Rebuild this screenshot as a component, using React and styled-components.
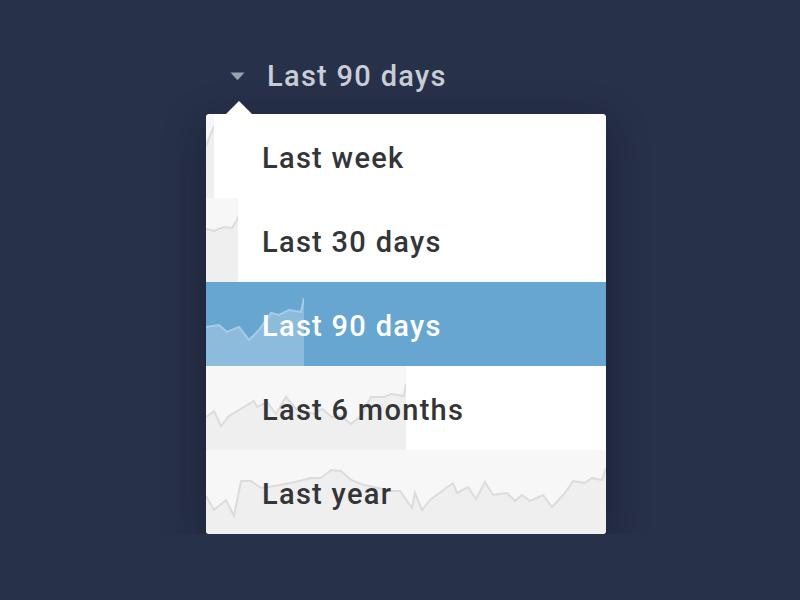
import React from "react";
import styled, { createGlobalStyle } from "styled-components";

const GlobalStyle = createGlobalStyle`
	html, body {
		margin: 0;
		padding: 0;
		background: #28314a;
	}
	body {
		font-family: Roboto, "Liberation Sans", sans-serif;
	}
`;

const ROW_H = 84;

const periods = [
	{
		label: "Last week",
		width: 8,
		points: [[0, 32], [4, 22], [8, 12]],
	},
	{
		label: "Last 30 days",
		width: 32,
		points: [[0, 31], [8, 33], [18, 29], [26, 30], [31, 22], [32, 18]],
	},
	{
		label: "Last 90 days",
		width: 98,
		selected: true,
		points: [
			[0, 45], [13, 43], [21, 50], [33, 45], [43, 58], [53, 48], [65, 31],
			[73, 33], [83, 28], [95, 30], [98, 16],
		],
	},
	{
		label: "Last 6 months",
		width: 200,
		points: [
			[0, 51], [8, 45], [15, 60], [23, 50], [48, 35], [51, 41], [61, 36],
			[70, 48], [80, 31], [90, 43], [98, 45], [108, 48], [116, 43], [126, 51],
			[135, 50], [145, 58], [155, 50], [165, 31], [178, 31], [185, 28],
			[198, 30], [200, 18],
		],
	},
	{
		label: "Last year",
		width: 400,
		points: [
			[0, 46], [8, 60], [20, 50], [28, 66], [35, 31], [45, 31], [55, 38],
			[74, 35], [89, 32], [105, 28], [115, 28], [125, 20], [135, 21],
			[145, 30], [158, 35], [172, 38], [185, 41], [194, 41], [206, 58],
			[209, 43], [216, 60], [224, 50], [247, 33], [251, 43], [262, 37],
			[270, 49], [279, 32], [287, 45], [301, 43], [309, 51], [316, 45],
			[324, 51], [337, 45], [346, 57], [359, 43], [367, 31], [379, 33],
			[386, 28], [396, 30], [400, 18],
		],
	},
];

const Page = styled.div`
	padding: 56px 0 0 206px;
	display: flex;
	flex-direction: column;
	gap: 18px;
`;

const Header = styled.div`
	display: flex;
	align-items: center;
	height: 40px;
	padding-left: 24px;
	gap: 22px;
`;

const Arrow = styled.svg`
	width: 15px;
	height: 8px;
	display: block;
`;

const HeaderLabel = styled.span`
	font-size: 29px;
	line-height: 1;
	font-weight: 500;
	letter-spacing: 1.3px;
	color: #c9cdd8;
`;

const Menu = styled.div`
	position: relative;
	width: 400px;
	background: #ffffff;
	border-radius: 4px;
	box-shadow: 0 12px 40px rgba(10, 14, 26, 0.45);
`;

const Caret = styled.div`
	position: absolute;
	top: -13px;
	left: 20px;
	width: 26px;
	height: 13px;
	background: #ffffff;
	clip-path: polygon(50% 0, 100% 100%, 0 100%);
`;

const List = styled.ul`
	margin: 0;
	padding: 0;
	list-style: none;
	border-radius: 4px;
	overflow: hidden;
`;

const Row = styled.li`
	position: relative;
	height: ${ROW_H}px;
	display: flex;
	align-items: center;
	padding: 4px 0 0 56px;
	box-sizing: border-box;
	background: ${({ $selected }) => ($selected ? "#67a6d1" : "#ffffff")};
	cursor: pointer;
`;

const Spark = styled.svg`
	position: absolute;
	left: 0;
	top: 0;
	height: ${ROW_H}px;
	display: block;
`;

const Label = styled.span`
	position: relative;
	font-size: 29px;
	line-height: 1;
	font-weight: 500;
	letter-spacing: 1.3px;
	color: ${({ $selected }) => ($selected ? "#ffffff" : "#333538")};
`;

const Sparkline = ({ width, points, selected }) => {
	const line = points.map(([x, y]) => `${x},${y}`).join(" ");
	const area = `${line} ${width},${ROW_H} 0,${ROW_H}`;
	return (
		<Spark width={width} viewBox={`0 0 ${width} ${ROW_H}`}>
			{!selected && <rect x="0" y="0" width={width} height={ROW_H} fill="#f7f7f7" />}
			<polygon points={area} fill={selected ? "#8dbbdc" : "#efefef"} />
			<polyline
				points={line}
				fill="none"
				stroke={selected ? "#a7cbe5" : "#dcdcdc"}
				strokeWidth="2"
				strokeLinejoin="miter"
			/>
		</Spark>
	);
};

const App = () => {
	const current = periods.find((p) => p.selected);
	return (
		<>
			<GlobalStyle />
			<Page>
				<Header>
					<Arrow viewBox="0 0 15 8">
						<path d="M0.5 0.5 H14.5 L8.2 7.4 Q7.5 8 6.8 7.4 Z" fill="#9aa1b0" />
					</Arrow>
					<HeaderLabel>{current.label}</HeaderLabel>
				</Header>
				<Menu>
					<Caret />
					<List>
						{periods.map((p) => (
							<Row key={p.label} $selected={p.selected}>
								<Sparkline width={p.width} points={p.points} selected={p.selected} />
								<Label $selected={p.selected}>{p.label}</Label>
							</Row>
						))}
					</List>
				</Menu>
			</Page>
		</>
	);
};

export default App;
